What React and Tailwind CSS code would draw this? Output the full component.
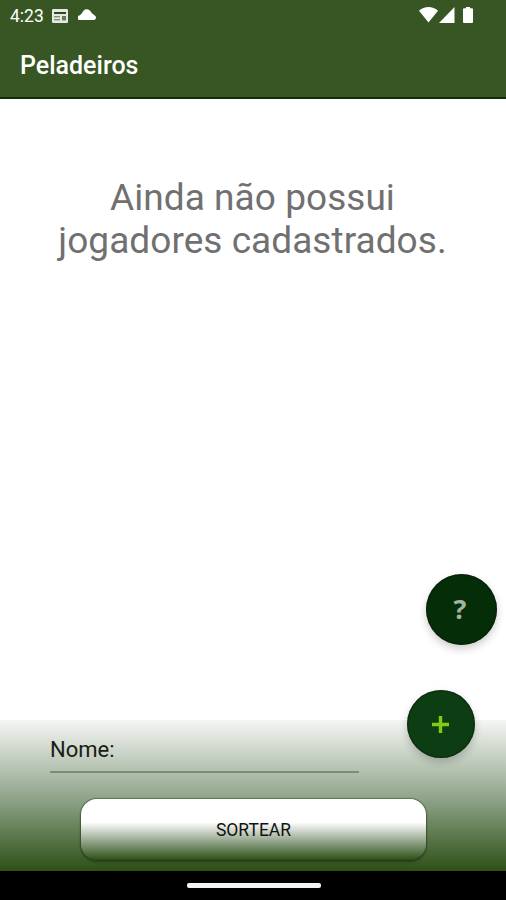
function StatusBar() {
  return (
    <div className="flex h-8 items-center justify-between pl-[10px] pr-[33px] text-white">
      <div className="flex items-center">
        <span className="w-[42px] text-[17.5px] leading-8 whitespace-nowrap">4:23</span>
        <svg className="mt-[-1px] h-[14px] w-[16px]" viewBox="0 0 16 14">
          <rect x="0" y="0" width="16" height="14" rx="1.2" fill="#e6e9e3" />
          <rect x="2" y="3" width="12" height="2" fill="#2d4a1f" />
          <rect x="2" y="7" width="6" height="1.4" fill="#7d8f71" />
          <rect x="2" y="10" width="6" height="1.4" fill="#7d8f71" />
          <rect x="10" y="7" width="4" height="4.4" fill="#66785a" />
        </svg>
        <svg className="mt-[-3px] ml-[10px] h-[11px] w-[18px]" viewBox="0 0 18 11">
          <path fill="#fff" d="M1.6 11A2.2 2.2 0 0 1 1.5 6.4C3.3 5.3 4.3 3.4 5.2 2.2 7.4-.7 11.3-.2 13 3 13.8 4.4 15 4.9 16.4 6.2A2.6 2.6 0 0 1 16.4 11Z" />
        </svg>
      </div>
      <div className="mt-[-2px] flex items-center">
        <svg className="h-4 w-[19px]" viewBox="0 0 19 16">
          <path fill="#fff" d="M0 3.8C5.4-1.2 13.6-1.2 19 3.8L9.5 15.5Z" />
        </svg>
        <svg className="ml-px h-4 w-4" viewBox="0 0 16 16">
          <path fill="#fff" d="M15.5 0V16H0Z" />
        </svg>
        <svg className="ml-[8px] h-[16px] w-[10px]" viewBox="0 0 10 16">
          <path fill="#fff" d="M3 0H7V1.3H9Q10 1.3 10 2.3V15Q10 16 9 16H1Q0 16 0 15V2.3Q0 1.3 1 1.3H3Z" />
        </svg>
      </div>
    </div>
  );
}

function Header() {
  return (
    <header className="h-[99px] border-b-2 border-[#122d0b] bg-[#375623]">
      <StatusBar />
      <h1 className="pl-5 text-[25px] leading-[68px] font-medium text-white">Peladeiros</h1>
    </header>
  );
}

export default function App() {
  return (
    <div className="relative flex h-[900px] w-[506px] flex-col overflow-hidden bg-white font-['Roboto',sans-serif]">
      <Header />
      <main className="flex-1 pt-[77px] text-center text-[37px] leading-[43px] tracking-[0.05px] text-[#707070]">
        <p className="-ml-px">
          Ainda não possui
          <br />
          jogadores cadastrados.
        </p>
      </main>
      <footer className="h-[151px] bg-[linear-gradient(180deg,#f5f6f4_0%,#93a78d_50%,#2d5016_100%)]">
        <div className="ml-[50px] h-[53px] w-[309px] border-b-2 border-[#7c8b76] text-[22px] leading-[59px] text-[#182015]">
          Nome:
        </div>
        <button className="mt-[26px] ml-[81px] block h-[61px] w-[345px] rounded-[16px] bg-[linear-gradient(180deg,#fff_0%,#fff_38%,#91a389_70%,#2d5016_100%)] text-[17.5px] leading-[63px] text-[#101410] shadow-[0_0_1px_1px_rgba(20,50,15,0.4),0_2px_3px_rgba(0,0,0,0.3)]">
          SORTEAR
        </button>
      </footer>
      <div className="flex h-[29px] items-center justify-center bg-black pl-px">
        <div className="h-[5px] w-[134px] rounded-[2px] bg-[#f3f3f3]" />
      </div>
      <button className="absolute top-[574px] left-[426px] flex size-[71px] items-center justify-center rounded-full bg-[#052d08] shadow-[0_4px_8px_rgba(0,0,0,0.2),inset_0_0_2px_#000]">
        <span className="-mt-[3px] -ml-[3px] font-['Open_Sans'] text-[27px] leading-none font-bold text-[#a3b3a2]">?</span>
      </button>
      <button className="absolute top-[690px] left-[407px] flex size-[68px] items-center justify-center rounded-full bg-[#0d3d12] shadow-[0_4px_8px_rgba(0,0,0,0.2),inset_0_0_2px_#000]">
        <svg className="-ml-px mt-px size-[17px]" viewBox="0 0 17 17">
          <path d="M8.5 0V17M0 8.5H17" stroke="#80cc10" strokeWidth="3.4" />
        </svg>
      </button>
    </div>
  );
}
